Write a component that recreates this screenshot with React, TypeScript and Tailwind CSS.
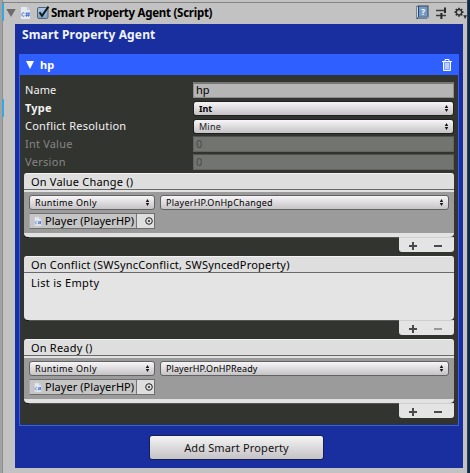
import React from 'react';

function ScriptIcon({ small = false }: { small?: boolean }) {
  return (
    <svg className={small ? 'h-[11px] w-2 shrink-0' : 'h-3.5 w-[11px]'} viewBox="0 0 11 14">
      <path d="M.5.5h7l3 3v10H.5z" fill="#e6e9ee" stroke="#b9bdc5" strokeWidth=".7" />
      <path d="M7.5.5v3h3" fill="#cfd4dc" stroke="#b9bdc5" strokeWidth=".7" />
      <path d="M4.4 7.1a1.7 1.7 0 1 0 0 2.8M6.9 6.2l-.4 4.6M9 6.2l-.4 4.6M5.6 7.7h4.2M5.4 9.4h4.2" fill="none" stroke="#3e6bd0" strokeWidth=".9" />
    </svg>
  );
}

function Arrows() {
  return (
    <svg className="h-[7px] w-[5px] shrink-0" viewBox="0 0 5 7">
      <path d="M2.5 0 4.2 3H.8zM2.5 7 4.2 4H.8z" fill="#111" />
    </svg>
  );
}

function Popup({ label, className }: { label: string; className: string }) {
  return (
    <div className={`flex h-[15px] items-center justify-between rounded-[3px] border bg-linear-to-b from-[#f7f5f7] to-[#c5c3c5] pr-1 pl-[5px] text-[9px] leading-[13px] ${className}`}>
      <span>{label}</span>
      <Arrows />
    </div>
  );
}

function Row({ label, labelClass = '', children }: { label: string; labelClass?: string; children: React.ReactNode }) {
  return (
    <div className="flex h-[18px] items-center">
      <div className={`w-[169px] shrink-0 pl-px ${labelClass}`}>{label}</div>
      {children}
    </div>
  );
}

function Footer({ minusClass = 'bg-[#4a4a4a]' }: { minusClass?: string }) {
  return (
    <div className="ml-[5px] flex h-[15px] justify-end border-t border-[#555653]">
      <div className="-mt-px flex h-[15px] w-[55px] items-center rounded-b-[3px] border-t border-[#cfcfcf] bg-[#e4e4e4] pt-px pr-3 pl-2.5">
        <svg className="h-2 w-2" viewBox="0 0 8 8">
          <path d="M3 0h2v3h3v2H5v3H3V5H0V3h3z" fill="#4a4a4a" />
        </svg>
        <i className={`ml-[17px] h-0.5 w-2 ${minusClass}`} />
      </div>
    </div>
  );
}

function ListHeader({ title, className = '' }: { title: string; className?: string }) {
  return (
    <div className={`h-[17px] rounded-t-[3px] border-t border-b border-t-[#f2f2f2] border-b-[#696969] bg-[#dedede] pl-[7px] leading-4 ${className}`}>
      {title}
    </div>
  );
}

function EventList({ title, titleClass, handler, handlerClass }: { title: string; titleClass: string; handler: string; handlerClass: string }) {
  return (
    <section className="w-[430px] text-black">
      <ListHeader title={title} className={titleClass} />
      <div className="h-[47px] rounded-b-sm border-t-2 border-b-4 border-t-[#e2e2e2] border-b-[#e2e2e2] bg-[#9b9b9b] px-[5px] pt-[3px] shadow-[0_1px_0_#181818]">
        <div className="flex gap-[5px]">
          <Popup label="Runtime Only" className="w-[126px] border-[#626262] tracking-[0.35px]" />
          <Popup label={handler} className={`w-[289px] border-[#626262] ${handlerClass}`} />
        </div>
        <div className="mt-[3px] flex h-4 w-[126px] items-center border border-[#6f6f6f] border-l-[#aaaaaa] bg-[#c5c5c5]">
          <div className="flex h-full w-[107px] shrink-0 items-center border-r border-[#777] pl-1">
            <ScriptIcon small />
            <span className="ml-[3px] text-[11px] leading-[14px] tracking-[0.05px] whitespace-nowrap">Player (PlayerHP)</span>
          </div>
          <div className="flex h-full flex-1 items-center justify-center bg-[#dedede] pl-1.5">
            <svg className="h-2 w-2 shrink-0" viewBox="0 0 8 8">
              <circle cx="4" cy="4" r="3.3" fill="none" stroke="#222" />
              <circle cx="4" cy="4" r="1" fill="#222" />
            </svg>
          </div>
        </div>
      </div>
      <Footer />
    </section>
  );
}

export default function App() {
  return (
    <div className="flex h-[473px] w-[470px] overflow-hidden bg-[#c2c2c2] font-['Noto_Sans','Open_Sans',sans-serif] text-[11px] leading-[14px] text-black">
      <div className="w-0.5 shrink-0 bg-[#a2a2a2]" />
      <div className="flex w-[13px] shrink-0 flex-col border-l border-[#8d8d8d] pt-[3px]">
        <div className="-ml-px h-[18px] w-0.5 bg-[#35a8e0]" />
        <div className="mt-[78px] -ml-px h-[18px] w-0.5 bg-[#35a8e0]" />
      </div>
      <div className="flex w-[448px] shrink-0 flex-col">
        <header className="-ml-[13px] flex h-6 w-[465px] shrink-0 flex-col">
          <div className="h-0.5 shrink-0" />
          <div className="h-px shrink-0 bg-[#828282]" />
          <div className="flex h-[19px] items-center pl-1">
            <svg className="h-2 w-2.5" viewBox="0 0 10 8"><path d="M.3 0h9.4L5 8z" fill="#6c6c6c" /></svg>
            <span className="ml-1"><ScriptIcon /></span>
            <svg className="ml-1.5 h-[13px] w-[13px] overflow-visible" viewBox="0 0 13 13">
              <defs><linearGradient id="check" x2="0" y2="1"><stop stopColor="#adc9e7" /><stop offset="1" stopColor="#7f9fc4" /></linearGradient></defs>
              <rect x=".5" y="1.5" width="10.5" height="11" rx="1.5" fill="url(#check)" stroke="#536275" />
              <path d="M2.5 6.2 5 9.8 11.5.6" fill="none" stroke="#101820" strokeWidth="2" />
            </svg>
            <span className="ml-px text-[11.5px] leading-4 font-bold tracking-[-0.27px] whitespace-nowrap">Smart Property Agent (Script)</span>
            <span className="flex-1" />
            <svg className="h-[15px] w-[13px]" viewBox="0 0 13 15">
              <path d="M.5 1 2.5.5h10v12l-2 1.5H.5z" fill="#2c4464" />
              <path d="M1.5 1.7v10.8" stroke="#cbdcf0" />
              <rect x="3" y="1.5" width="8.5" height="10.3" fill="#789bc2" />
              <path d="M2 13h8.5l1.5-1" fill="none" stroke="#dbe6f2" strokeWidth=".8" />
              <text x="7.2" y="9.8" textAnchor="middle" fontSize="8" fontWeight="700" fill="#fff">?</text>
            </svg>
            <svg className="mr-px ml-[7px] h-3 w-[11px]" viewBox="0 0 11 12">
              <path d="M0 3.5h10M0 8.5h10" fill="none" stroke="#3c3c3c" strokeWidth="1.4" />
              <path d="M9 .5v5.5M5.4 6v6" stroke="#292929" strokeWidth="2" />
            </svg>
            <svg className="ml-1.5 h-3 w-[13px]" viewBox="0 0 13 12">
              <g stroke="#303030" strokeWidth="1.7"><path d="M5 .7v9M.5 5.2h9M1.8 2l6.4 6.4M8.2 2 1.8 8.4" /></g>
              <circle cx="5" cy="5.2" r="2.7" fill="#c2c2c2" stroke="#303030" strokeWidth="1.4" />
              <path d="M9.2 8.3H13L11.1 12z" fill="#303030" />
            </svg>
          </div>
        </header>
        <main className="flex h-[444px] flex-col bg-[#192f9f] px-1">
          <h1 className="h-[30px] shrink-0 pt-[3px] pl-[3px] text-[12px] leading-4 font-bold tracking-[0.14px] text-[#f1f5ff]">Smart Property Agent</h1>
          <div className="flex h-[21px] shrink-0 items-center bg-[#305fff] pr-[7px] pl-[7px] text-white">
            <svg className="h-2 w-2" viewBox="0 0 8 8"><path d="M0 0h8L4 8z" fill="#fff" /></svg>
            <span className="ml-1.5 flex-1 text-[11px] font-bold">hp</span>
            <svg className="h-3 w-2.5" viewBox="0 0 10 12">
              <path d="M2 3h6v8.5H2z" fill="#7d9fff" />
              <path d="M0 2.5h10M3 2V.5h4V2M1.5 3v8.5h7V3M4 4v6M6 4v6" fill="none" stroke="#fff" strokeWidth="1" />
            </svg>
          </div>
          <div className="h-[351px] shrink-0 border border-t-0 border-[#305fff] bg-[#323430] px-1 pt-1.5">
            <div className="text-[#f2f2f2]">
              <Row label="Name" labelClass="tracking-[0.05px]">
                <div className="h-4 w-[262px] border border-t-2 border-[#8c8c8c] border-t-[#777] bg-[#b5b5b5] pl-0.5 leading-[12px] text-black">hp</div>
              </Row>
              <Row label="Type" labelClass="font-bold tracking-[0.2px]">
                <Popup label="Int" className="w-[262px] border-[#202020] font-bold text-black" />
              </Row>
              <Row label="Conflict Resolution" labelClass="tracking-[0.24px]">
                <Popup label="Mine" className="w-[262px] border-[#202020] tracking-[0.2px] text-[#222]" />
              </Row>
              <Row label="Int Value" labelClass="tracking-[0.2px] text-[#858684]">
                <div className="h-4 w-[262px] border border-[#626460] border-t-[#50524f] bg-[#727470] pl-0.5 leading-[14px] text-[#4a4b49]">0</div>
              </Row>
              <Row label="Version" labelClass="tracking-[0.3px] text-[#858684]">
                <div className="h-4 w-[262px] border border-[#626460] border-t-[#50524f] bg-[#727470] pl-0.5 leading-[14px] text-[#4a4b49]">0</div>
              </Row>
            </div>
            <div className="mt-0.5 flex flex-col gap-1">
              <EventList title="On Value Change ()" titleClass="tracking-[0.2px]" handler="PlayerHP.OnHpChanged" handlerClass="tracking-[0.25px]" />
              <section className="w-[430px] text-black">
                <ListHeader title="On Conflict (SWSyncConflict, SWSyncedProperty)" className="tracking-[0.2px]" />
                <div className="h-[47px] rounded-b-sm bg-[#e4e4e4] pt-[3px] pl-[7px] tracking-[0.3px] shadow-[0_1px_0_#181818]">List is Empty</div>
                <Footer minusClass="bg-[#999]" />
              </section>
              <EventList title="On Ready ()" titleClass="tracking-[0.2px]" handler="PlayerHP.OnHPReady" handlerClass="tracking-[0.1px]" />
            </div>
          </div>
          <div className="flex justify-center pt-[9px] pr-[5px]">
            <button className="h-[25px] w-[175px] rounded-[3px] border border-[#14204f] bg-linear-to-b from-[#f5f4f5] to-[#c4c2c4] text-[11px] tracking-[0.15px] text-[#111]">Add Smart Property</button>
          </div>
        </main>
      </div>
      <div className="w-1 shrink-0" />
      <div className="flex-1 border-l border-[#304050] bg-[#0b2948]" />
    </div>
  );
}
